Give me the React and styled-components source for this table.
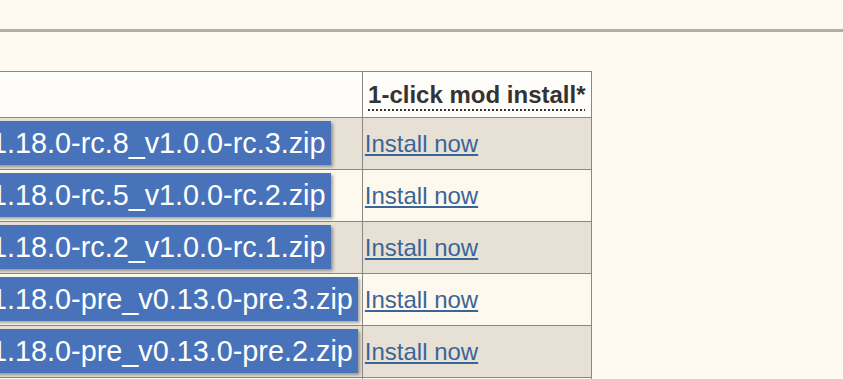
import styled, { createGlobalStyle } from 'styled-components';

const GlobalStyle = createGlobalStyle`
    html, body {
        margin: 0;
        padding: 0;
        background: #fefaf2;
        overflow: hidden;
    }
    body {
        font-family: "Liberation Sans", Arial, sans-serif;
        font-size: 24px;
        color: #333;
    }
`;

const files = [
    { name: '1.18.0-rc.8_v1.0.0-rc.3.zip' },
    { name: '1.18.0-rc.5_v1.0.0-rc.2.zip' },
    { name: '1.18.0-rc.2_v1.0.0-rc.1.zip' },
    { name: '1.18.0-pre_v0.13.0-pre.3.zip' },
    { name: '1.18.0-pre_v0.13.0-pre.2.zip' },
    { name: '1.18.0-pre_v0.13.0-pre.1.zip' },
];

function App() {
    return (
        <Page>
            <GlobalStyle />
            <TopBar />
            <Content>
                <Downloads>
                    <thead>
                        <tr>
                            <HeadCell />
                            <HeadCell $wide>
                                <abbr>1-click mod install*</abbr>
                            </HeadCell>
                        </tr>
                    </thead>
                    <tbody>
                        {files.map((f, i) => (
                            <Row key={f.name} $odd={i % 2 === 0}>
                                <FileCell>
                                    <FileButton href="#">{f.name}</FileButton>
                                </FileCell>
                                <InstallCell>
                                    <InstallLink href="#">Install now</InstallLink>
                                </InstallCell>
                            </Row>
                        ))}
                    </tbody>
                </Downloads>
            </Content>
        </Page>
    );
}
export default App;

const Page = styled.div`
    width: 100%;
    min-height: 379px;
`;

const TopBar = styled.div`
    height: 29px;
    background: #fefaf2;
    border-bottom: 3px solid #b0aea6;
`;

// the page is scrolled sideways, so the file column starts off screen
const Content = styled.div`
    padding-top: 39px;
    margin-left: -19px;
`;

const Downloads = styled.table`
    border-collapse: separate;
    border-spacing: 0;
    border-top: 1px solid #8a8884;
    border-left: 1px solid #8a8884;
`;

const HeadCell = styled.th`
    background: #fffdf9;
    border-right: 1px solid #8a8884;
    border-bottom: 1px solid #8a8884;
    padding: 0 1px;
    width: ${(p) => (p.$wide ? '226px' : 'auto')};
    line-height: 45px;
    text-align: center;
    font-weight: bold;
    color: #333;

    abbr {
        text-decoration: underline dotted;
        text-decoration-thickness: 2px;
        text-underline-offset: 6px;
    }
`;

const Row = styled.tr`
    background: ${(p) => (p.$odd ? '#e7e1d5' : '#fef9ee')};
`;

const FileCell = styled.td`
    padding: 3px 4px 4px 4px;
    border-right: 1px solid #8a8884;
    border-bottom: 1px solid #8a8884;
    vertical-align: top;
`;

const FileButton = styled.a`
    display: inline-block;
    height: 44px;
    line-height: 44px;
    padding: 0 5px;
    background: #4873ba;
    color: #fff;
    font-size: 28.8px;
    text-decoration: none;
    white-space: nowrap;
    box-shadow: 2px 2px 3px rgba(0, 0, 0, 0.35);
    vertical-align: top;
`;

const InstallCell = styled.td`
    padding: 0 1px 0 2px;
    border-right: 1px solid #8a8884;
    border-bottom: 1px solid #8a8884;
    vertical-align: middle;
`;

const InstallLink = styled.a`
    color: #3a6598;
    text-decoration: underline;
    white-space: nowrap;
`;
